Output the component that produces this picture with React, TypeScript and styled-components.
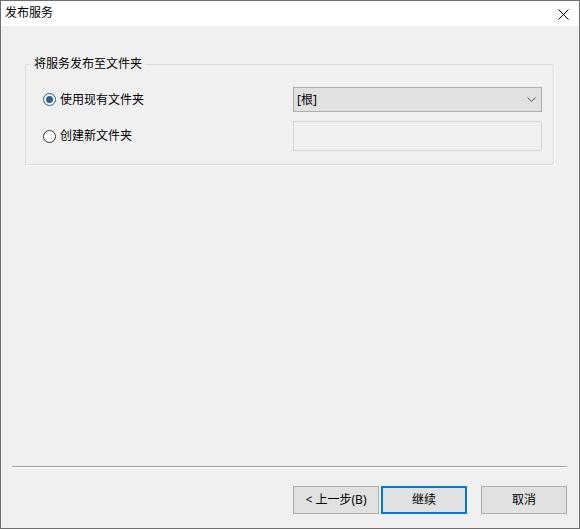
import React from "react";
import styled, { createGlobalStyle } from "styled-components";

const Global = createGlobalStyle`
  html, body { margin: 0; padding: 0; background: #f0f0f0; }
  body { font-family: "Noto Sans", "Noto Sans CJK SC", sans-serif; font-size: 12px; color: #000; }
  * { box-sizing: border-box; }
`;

const Window = styled.div`
  width: 580px;
  height: 529px;
  border: 1px solid #707070;
  display: flex;
  flex-direction: column;
  background: #f0f0f0;
  font-family: "Noto Sans", "Noto Sans CJK SC", sans-serif;
`;

const TitleBar = styled.div`
  height: 25px;
  background: #ffffff;
  display: flex;
  align-items: center;
  justify-content: space-between;
  padding: 0 10px 0 4px;
  flex-shrink: 0;
`;

const Title = styled.span`
  font-size: 12px;
  line-height: 16px;
  margin-top: -1px;
`;

const CloseIcon = styled.svg`
  width: 11px;
  height: 11px;
  margin-top: 1px;
`;

const Body = styled.div`
  flex: 1;
  display: flex;
  flex-direction: column;
  padding: 30px 0 0 0;
`;

const Group = styled.fieldset`
  margin: 0 25px 0 24px;
  padding: 0;
  border: 1px solid #dcdcdc;
  box-shadow: 1px 1px 0 #ffffff;
`;

const Legend = styled.legend`
  margin-left: 5px;
  padding: 0 3px;
  font-size: 12px;
  line-height: 16px;
`;

const GroupGrid = styled.div`
  padding: 15px 11px 13px 17px;
  display: grid;
  grid-template-columns: 1fr 249px;
  row-gap: 9px;
  align-items: center;
`;

const RadioLabel = styled.label`
  display: flex;
  align-items: center;
  gap: 4px;
  font-size: 12px;
  line-height: 16px;
`;

const RadioCircle = styled.span<{ $checked?: boolean }>`
  width: 13px;
  height: 13px;
  border-radius: 50%;
  border: 1px solid ${(p) => (p.$checked ? "#1f5a8f" : "#333333")};
  background: #ffffff;
  display: flex;
  align-items: center;
  justify-content: center;
  flex-shrink: 0;
  &::after {
    content: "";
    width: 7px;
    height: 7px;
    border-radius: 50%;
    background: ${(p) => (p.$checked ? "#2a6196" : "transparent")};
  }
`;

const Combo = styled.div`
  height: 25px;
  background: #e1e1e1;
  border: 1px solid #adadad;
  display: flex;
  align-items: center;
  justify-content: space-between;
  padding: 0 5px 0 3px;
  font-size: 12px;
  line-height: 16px;
`;

const Chevron = styled.svg`
  width: 9px;
  height: 6px;
`;

const TextBox = styled.div`
  height: 30px;
  background: #f0f0f0;
  border: 1px solid #d4d4d4;
`;

const Spacer = styled.div`
  flex: 1;
`;

const Separator = styled.div`
  height: 2px;
  margin: 0 12px 0 11px;
  border-top: 1px solid #a0a0a0;
  border-bottom: 1px solid #ffffff;
`;

const ButtonRow = styled.div`
  display: flex;
  justify-content: flex-end;
  padding: 18px 12px 14px 0;
`;

const Button = styled.button<{ $default?: boolean; $gapAfter?: number }>`
  width: 86px;
  height: 28px;
  margin-right: ${(p) => p.$gapAfter ?? 0}px;
  background: #e1e1e1;
  border: ${(p) => (p.$default ? "2px solid #0078d7" : "1px solid #adadad")};
  font-family: "Noto Sans", "Noto Sans CJK SC", sans-serif;
  font-size: 12px;
  line-height: 16px;
  color: #000;
  padding: 0;
`;

export default function App() {
  return (
    <>
      <Global />
      <Window>
        <TitleBar>
          <Title>发布服务</Title>
          <CloseIcon viewBox="0 0 11 11">
            <path d="M0.5 0.5 L10.5 10.5 M10.5 0.5 L0.5 10.5" stroke="#000" strokeWidth="1" fill="none" />
          </CloseIcon>
        </TitleBar>
        <Body>
          <Group>
            <Legend>将服务发布至文件夹</Legend>
            <GroupGrid>
              <RadioLabel>
                <RadioCircle $checked />
                使用现有文件夹
              </RadioLabel>
              <Combo>
                <span>[根]</span>
                <Chevron viewBox="0 0 9 6">
                  <path d="M0.5 0.5 L4.5 4.5 L8.5 0.5" stroke="#555" strokeWidth="1" fill="none" />
                </Chevron>
              </Combo>
              <RadioLabel>
                <RadioCircle />
                创建新文件夹
              </RadioLabel>
              <TextBox />
            </GroupGrid>
          </Group>
          <Spacer />
          <Separator />
          <ButtonRow>
            <Button $gapAfter={2}>&lt; 上一步(B)</Button>
            <Button $default $gapAfter={14}>继续</Button>
            <Button>取消</Button>
          </ButtonRow>
        </Body>
      </Window>
    </>
  );
}
